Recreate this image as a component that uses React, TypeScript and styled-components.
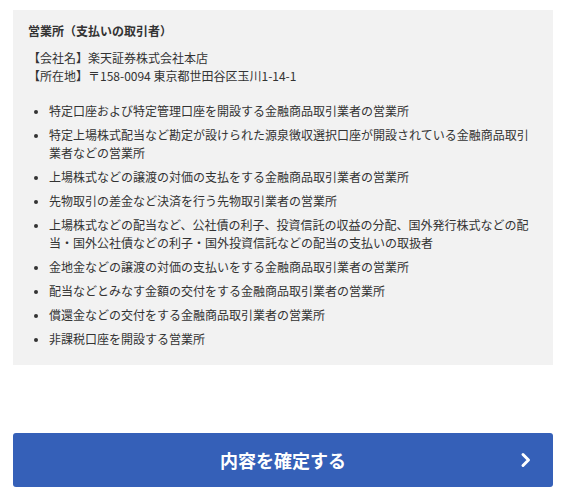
import React from 'react';
import styled, { createGlobalStyle } from 'styled-components';

// =============================================================================
// Global
// =============================================================================

const GlobalStyle = createGlobalStyle`
  html, body {
    margin: 0;
    padding: 0;
    background: #ffffff;
  }
  body {
    font-family: 'Noto Sans CJK JP', 'Noto Sans', sans-serif;
    color: #333333;
  }
`;

// =============================================================================
// Styled Components
// =============================================================================

const Page = styled.div`
  width: 540px;
  padding: 10px 13px 11px;
  display: flex;
  flex-direction: column;
  gap: 68px;
`;

const InfoBox = styled.section`
  background: #f2f2f2;
  padding: 12px 15px 17px;
  font-size: 12px;
  line-height: 18px;
`;

const Title = styled.h2`
  margin: 0 0 9px;
  font-size: 12px;
  line-height: 18px;
  font-weight: bold;
  color: #333333;
`;

const Address = styled.p`
  margin: 0 0 17px;
`;

const List = styled.ul`
  margin: 0;
  padding: 0 0 0 21px;
  list-style: disc;
`;

const Item = styled.li`
  & + & {
    margin-top: 6px;
  }
  &::marker {
    font-size: 10px;
  }
`;

const ConfirmButton = styled.button`
  position: relative;
  display: flex;
  align-items: center;
  justify-content: center;
  width: 100%;
  height: 54px;
  border: none;
  border-radius: 3px;
  background: #3560b8;
  color: #ffffff;
  font-family: inherit;
  font-size: 18px;
  font-weight: bold;
  cursor: pointer;
`;

const Chevron = styled.svg`
  position: absolute;
  right: 21px;
  top: 50%;
  transform: translateY(-50%);
`;

// =============================================================================
// Main Component
// =============================================================================

const items = [
  '特定口座および特定管理口座を開設する金融商品取引業者の営業所',
  '特定上場株式配当など勘定が設けられた源泉徴収選択口座が開設されている金融商品取引業者などの営業所',
  '上場株式などの譲渡の対価の支払をする金融商品取引業者の営業所',
  '先物取引の差金など決済を行う先物取引業者の営業所',
  '上場株式などの配当など、公社債の利子、投資信託の収益の分配、国外発行株式などの配当・国外公社債などの利子・国外投資信託などの配当の支払いの取扱者',
  '金地金などの譲渡の対価の支払いをする金融商品取引業者の営業所',
  '配当などとみなす金額の交付をする金融商品取引業者の営業所',
  '償還金などの交付をする金融商品取引業者の営業所',
  '非課税口座を開設する営業所',
];

const App = () => (
  <>
    <GlobalStyle />
    <Page>
      <InfoBox>
        <Title>営業所（支払いの取引者）</Title>
        <Address>
          【会社名】楽天証券株式会社本店
          <br />
          【所在地】〒158-0094 東京都世田谷区玉川1-14-1
        </Address>
        <List>
          {items.map((text) => (
            <Item key={text}>{text}</Item>
          ))}
        </List>
      </InfoBox>
      <ConfirmButton type="button">
        内容を確定する
        <Chevron width="12" height="16" viewBox="0 0 12 16" fill="none">
          <path d="M3 2.5 L8.5 8 L3 13.5" stroke="#ffffff" strokeWidth="3" strokeLinecap="round" strokeLinejoin="round" />
        </Chevron>
      </ConfirmButton>
    </Page>
  </>
);

export default App;
